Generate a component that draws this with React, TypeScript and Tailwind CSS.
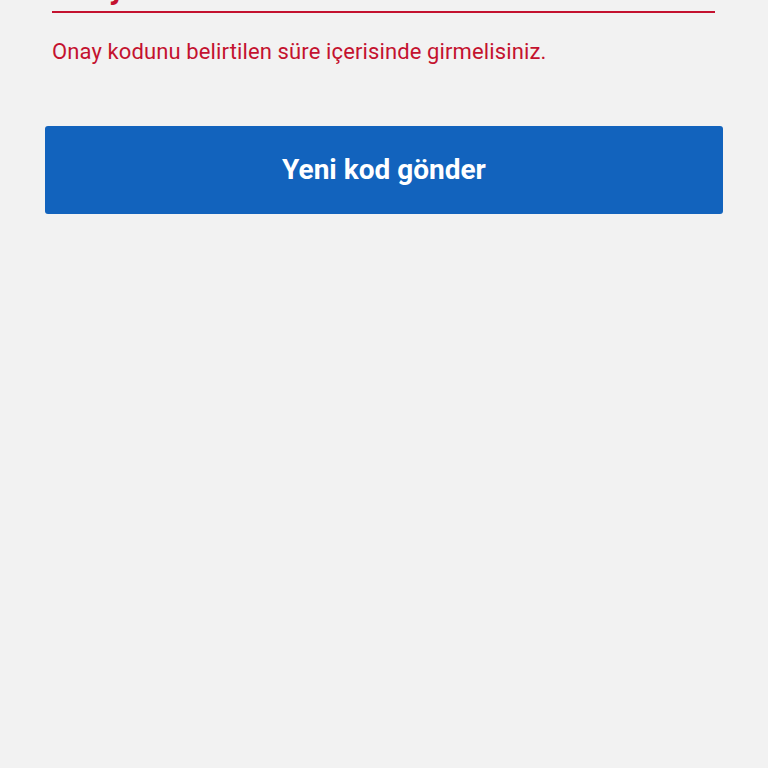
export default function App() {
  return (
    <div className="w-[768px] h-[768px] bg-[#f2f2f2] overflow-hidden" style={{ fontFamily: "Roboto, 'Noto Sans', sans-serif" }}>
      <div className="px-[52px]">
        <div className="h-[11px] overflow-hidden flex items-end">
          <span className="text-[32px] font-bold leading-[1.4] text-[#c4122f]">Onay kodu</span>
        </div>
        <div className="h-[2px] mr-[1px] bg-[#c4122f]" />
        <p className="mt-[26px] text-[22px] leading-[26px] tracking-[0.12px] text-[#c4122f]">Onay kodunu belirtilen süre içerisinde girmelisiniz.</p>
      </div>
      <div className="px-[45px] mt-[61px]">
        <button className="w-full h-[88px] rounded-[3px] bg-[#1263bd] text-white text-[28px] font-bold flex items-center justify-center">Yeni kod gönder</button>
      </div>
    </div>
  );
}
